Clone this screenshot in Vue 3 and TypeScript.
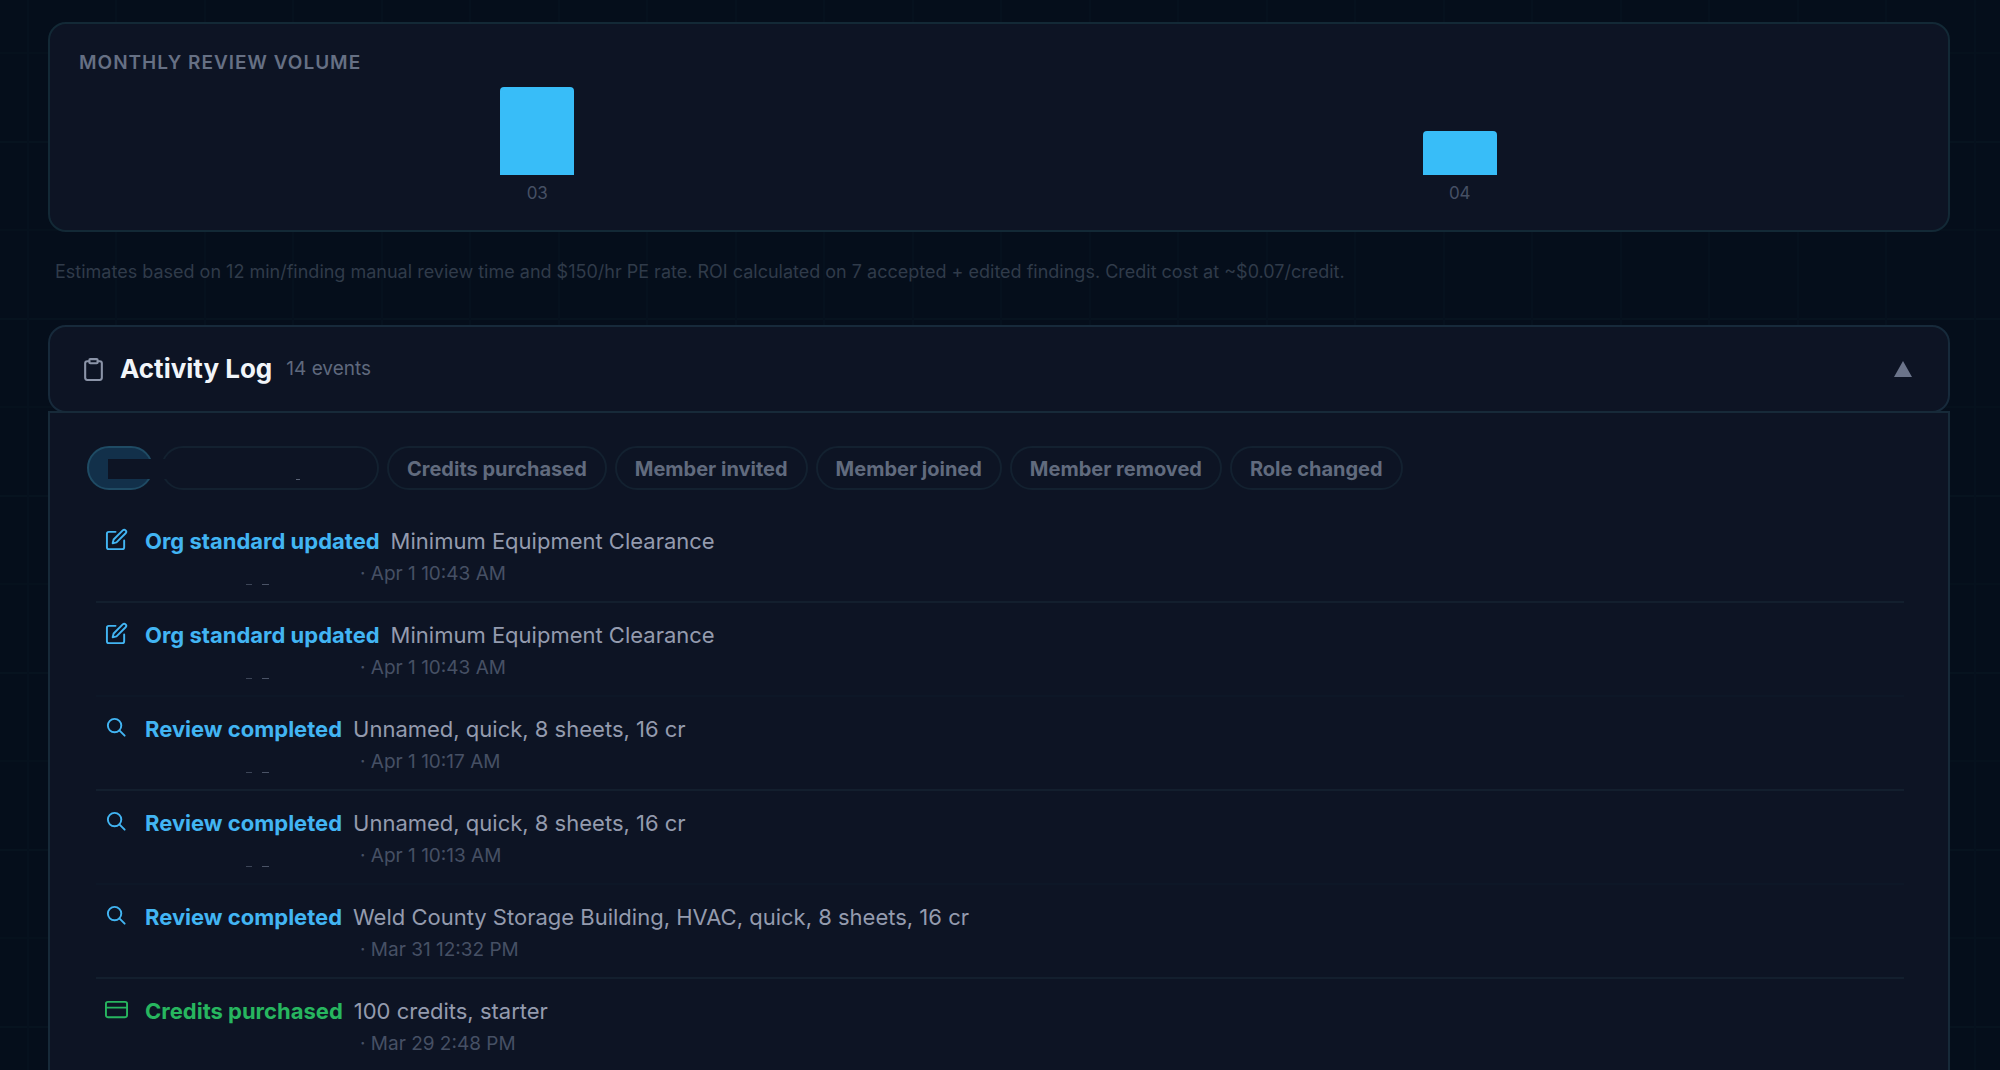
<script setup lang="ts">
import { ref } from 'vue'

type Kind = 'edit' | 'search' | 'credit'

interface Event {
  kind: Kind
  action: string
  detail: string
  time: string
}

const months = [
  { label: '03', reviews: 4 },
  { label: '04', reviews: 2 },
]

const filters = ['Credits purchased', 'Member invited', 'Member joined', 'Member removed', 'Role changed']

const events: Event[] = [
  { kind: 'edit', action: 'Org standard updated', detail: 'Minimum Equipment Clearance', time: 'Apr 1 10:43 AM' },
  { kind: 'edit', action: 'Org standard updated', detail: 'Minimum Equipment Clearance', time: 'Apr 1 10:43 AM' },
  { kind: 'search', action: 'Review completed', detail: 'Unnamed, quick, 8 sheets, 16 cr', time: 'Apr 1 10:17 AM' },
  { kind: 'search', action: 'Review completed', detail: 'Unnamed, quick, 8 sheets, 16 cr', time: 'Apr 1 10:13 AM' },
  { kind: 'search', action: 'Review completed', detail: 'Weld County Storage Building, HVAC, quick, 8 sheets, 16 cr', time: 'Mar 31 12:32 PM' },
  { kind: 'credit', action: 'Credits purchased', detail: '100 credits, starter', time: 'Mar 29 2:48 PM' },
]

const open = ref(true)
</script>

<template>
  <main class="page">
    <section class="card volume">
      <h2 class="volume-title">Monthly Review Volume</h2>
      <div class="chart">
        <div v-for="m in months" :key="m.label" class="column">
          <div class="bar" :style="{ height: m.reviews * 22 + 'px' }"></div>
          <span class="month">{{ m.label }}</span>
        </div>
      </div>
    </section>

    <p class="note">Estimates based on 12 min/finding manual review time and $150/hr PE rate. ROI calculated on 7 accepted + edited findings. Credit cost at ~$0.07/credit.</p>

    <button class="card log-head" type="button" :aria-expanded="open" @click="open = !open">
      <svg class="clip" viewBox="0 0 24 24" aria-hidden="true">
        <path d="M16 4h2a2 2 0 0 1 2 2v14a2 2 0 0 1-2 2H6a2 2 0 0 1-2-2V6a2 2 0 0 1 2-2h2" />
        <rect x="8" y="2" width="8" height="4" rx="1" />
      </svg>
      <span class="log-title">Activity Log</span>
      <span class="log-count">14 events</span>
      <svg class="caret" viewBox="0 0 18 16" aria-hidden="true"><path d="M9 0l9 16H0z" /></svg>
    </button>

    <section v-if="open" class="log-body">
      <div class="filters">
        <button class="chip active" type="button" aria-label="All"><i class="mask"></i></button>
        <button class="chip blank" type="button" aria-label="Event type"><i class="speck"></i></button>
        <button v-for="f in filters" :key="f" class="chip" type="button">{{ f }}</button>
      </div>
      <ul class="events">
        <li v-for="(e, i) in events" :key="i" class="event" :class="e.kind">
          <svg class="icon" viewBox="0 0 24 24" aria-hidden="true">
            <template v-if="e.kind === 'edit'">
              <path d="M11 4H4a2 2 0 0 0-2 2v14a2 2 0 0 0 2 2h14a2 2 0 0 0 2-2v-7" />
              <path d="M18.500 2.500a2.121 2.121 0 0 1 3 3L12 15l-4 1 1-4z" />
            </template>
            <template v-else-if="e.kind === 'search'">
              <circle cx="10" cy="10" r="7" />
              <path d="M20.500 20.500L15 15" />
            </template>
            <template v-else>
              <rect x="1" y="4" width="22" height="16" rx="2" />
              <path d="M1 10h22" />
            </template>
          </svg>
          <div class="event-text">
            <div class="line"><strong class="action">{{ e.action }}</strong><span class="detail">{{ e.detail }}</span></div>
            <div class="meta"><span class="actor"></span><span>· {{ e.time }}</span></div>
          </div>
        </li>
      </ul>
    </section>
  </main>
</template>

<style>
body {
  margin: 0;
  background: #050e1b;
}
</style>

<style scoped>
.page {
  box-sizing: border-box;
  height: 100vh;
  overflow: hidden;
  padding: 22px 50px 0 48px;
  font-family: Inter, "Liberation Sans", sans-serif;
  background-color: #050e1b;
  background-image:
    linear-gradient(90deg, #06111e 2px, transparent 2px, transparent 88px, #06111e 88px, #06111e 90px, transparent 90px),
    linear-gradient(#07131f 2px, transparent 2px, transparent 88px, #06111d 88px, #06111d 90px, transparent 90px);
  background-size: 177px 177px;
  background-position: 27px 141px;
}
.card {
  box-sizing: border-box;
  border: 2px solid #132936;
  border-radius: 18px;
  background: #0d1424;
}
.volume {
  height: 210px;
  padding: 26px 30px 0 29px;
}
.volume-title {
  margin: 0;
  font-size: 19px;
  line-height: 26px;
  font-weight: 600;
  letter-spacing: 1px;
  text-transform: uppercase;
  color: #667084;
}
.chart {
  display: flex;
  align-items: flex-end;
  gap: 6px;
  height: 129px;
}
.column {
  flex: 1;
  display: flex;
  flex-direction: column;
  align-items: center;
}
.bar {
  width: 74px;
  border-radius: 4px 4px 0 0;
  background: #38bdf8;
}
.month {
  margin-top: 7px;
  font-size: 17px;
  line-height: 23px;
  color: #465064;
}
.note {
  margin: 28px 7px 0;
  font-size: 18px;
  line-height: 24px;
  color: #303b4a;
}
.log-head {
  display: flex;
  align-items: center;
  width: 100%;
  height: 88px;
  margin-top: 41px;
  padding: 0 36px 0 31px;
  border-color: #172a3b;
  font: inherit;
  text-align: left;
}
.clip {
  width: 25px;
  height: 25px;
  margin-right: 14px;
  fill: none;
  stroke: #8b94a8;
  stroke-width: 2;
  stroke-linecap: round;
  stroke-linejoin: round;
}
.log-title {
  font-size: 26px;
  line-height: 34px;
  font-weight: 700;
  color: #f1f5f9;
}
.log-count {
  margin-left: 14px;
  font-size: 19px;
  line-height: 26px;
  color: #5f697d;
}
.caret {
  width: 18px;
  height: 16px;
  margin-left: auto;
  fill: #6b748a;
}
.log-body {
  margin-top: -2px;
  padding: 33px 37px 0;
  border: 2px solid #172a39;
  border-bottom: 0;
  background: #0d1424;
}
.filters {
  display: flex;
  gap: 8px;
}
.chip {
  box-sizing: border-box;
  height: 44px;
  padding: 1px 18px 0;
  border: 2px solid #132130;
  border-radius: 22px;
  background: transparent;
  font: 700 20px/26px Inter, "Liberation Sans", sans-serif;
  color: #616b7e;
}
.active {
  position: relative;
  width: 66px;
  border-color: #1f4b64;
  background: #12304a;
}
.mask {
  position: absolute;
  left: 19px;
  top: 11px;
  width: 60px;
  height: 20px;
  background: #0d1424;
}
.blank {
  width: 218px;
}
.speck {
  display: block;
  width: 4px;
  height: 1px;
  margin: 21px 0 0 115px;
  background: #5a6376;
}
.events {
  margin: 19px 7px 0 9px;
  padding: 0;
  list-style: none;
}
.event {
  box-sizing: border-box;
  display: flex;
  height: 94px;
  padding: 18px 9px 0;
  border-bottom: 2px solid #131f2e;
  color: #42b5f3;
}
.event:nth-child(even) {
  border-bottom-color: #0d1727;
}
.event.credit {
  color: #27b65f;
}
.icon {
  width: 23px;
  height: 23px;
  margin: 1px 17px 0 0;
  fill: none;
  stroke: currentColor;
  stroke-width: 2;
  stroke-linecap: round;
  stroke-linejoin: round;
}
.line {
  font-size: 22px;
  line-height: 28px;
}
.action {
  font-weight: 700;
}
.detail {
  margin-left: 11px;
  color: #949bae;
}
.meta {
  display: flex;
  margin-top: 6px;
  font-size: 19px;
  line-height: 26px;
  color: #465064;
}
.actor {
  width: 215px;
}
.edit .actor,
.search .actor {
  background:
    linear-gradient(#3c4557, #3c4557) 101px 23px / 6px 1px no-repeat,
    linear-gradient(#4a5366, #4a5366) 117px 23px / 7px 1px no-repeat;
}
.event:nth-child(5) .actor {
  background: none;
}
</style>
